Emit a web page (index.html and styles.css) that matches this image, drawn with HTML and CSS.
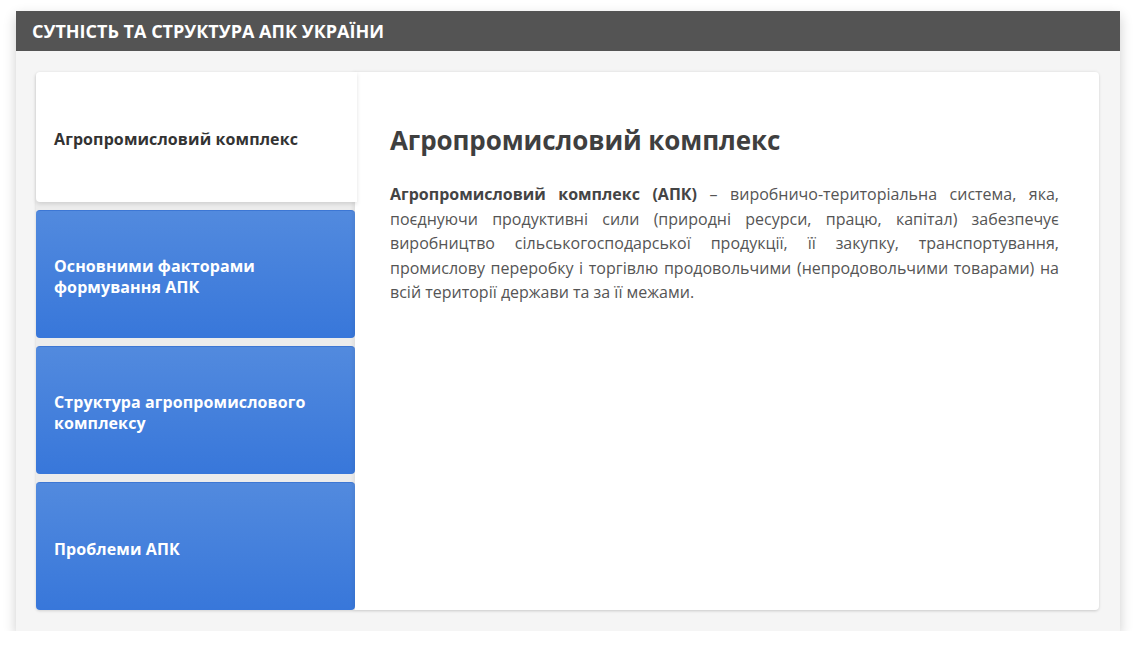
FILE: index.html
```html
<!DOCTYPE html>
<html lang="uk">
<head>
<meta charset="utf-8">
<title>Сутність та структура АПК України</title>
<link rel="stylesheet" href="styles.css">
</head>
<body>
<div class="panel">
  <div class="panel-header">СУТНІСТЬ ТА СТРУКТУРА АПК УКРАЇНИ</div>
  <div class="panel-body">
    <div class="card">
      <div class="tabs">
        <div class="tab active">Агропромисловий комплекс</div>
        <div class="tab">Основними факторами формування АПК</div>
        <div class="tab">Структура агропромислового комплексу</div>
        <div class="tab">Проблеми АПК</div>
      </div>
      <div class="content">
        <h2 class="content-title">Агропромисловий комплекс</h2>
        <p class="content-text"><b>Агропромисловий комплекс (АПК)</b> – виробничо-територіальна система, яка, поєднуючи продуктивні сили (природні ресурси, працю, капітал) забезпечує виробництво сільськогосподарської продукції, її закупку, транспортування, промислову переробку і торгівлю продовольчими (непродовольчими товарами) на всій території держави та за її межами.</p>
      </div>
    </div>
  </div>
</div>
</body>
</html>
```
FILE: styles.css
```css
html, body {
  margin: 0;
  padding: 0;
  background: #ffffff;
  font-family: "Open Sans", "Liberation Sans", sans-serif;
}

.panel {
  margin: 11px 16px 0;
  width: 1104px;
  background: #f5f5f5;
  box-shadow: 0 5px 12px rgba(0, 0, 0, 0.2);
}

.panel-header {
  height: 40px;
  line-height: 40px;
  background: #545454;
  color: #ffffff;
  font-weight: 700;
  font-size: 18px;
  padding-left: 16px;
}

.panel-body {
  padding: 21px 21px 21px 20px;
}

.card {
  display: flex;
  height: 538px;
  background: #ffffff;
  border-radius: 4px;
  box-shadow: 0 1px 3px rgba(0, 0, 0, 0.15);
}

.tabs {
  width: 319px;
  display: flex;
  flex-direction: column;
  gap: 8px;
  background: #ececec;
  border-radius: 4px 0 0 4px;
}

.tab {
  flex: 1;
  display: flex;
  align-items: center;
  padding: 6px 40px 0 18px;
  font-size: 16px;
  font-weight: 700;
  line-height: 21px;
  color: #ffffff;
  background: linear-gradient(to bottom, #528ade, #3877da);
  border-radius: 4px;
  border-top: 1px solid #3d77d4;
  letter-spacing: 0.1px;
}

.tab.active {
  flex: 1.02;
  background: #ffffff;
  color: #333333;
  border-top: none;
  border-radius: 4px 0 0 4px;
  box-shadow: 0 2px 4px rgba(0, 0, 0, 0.12);
  margin-right: -2px;
  position: relative;
}

.content {
  flex: 1;
  padding: 52px 40px 0 35px;
  box-shadow: -2px 0 4px rgba(0, 0, 0, 0.06);
}

.content-title {
  margin: 0 0 26px;
  font-size: 26px;
  line-height: 32px;
  font-weight: 700;
  color: #3f3f3f;
  letter-spacing: -0.1px;
}

.content-text {
  margin: 0;
  font-size: 16px;
  line-height: 24.5px;
  color: #555555;
  text-align: justify;
}

.content-text b {
  color: #444444;
}
```
